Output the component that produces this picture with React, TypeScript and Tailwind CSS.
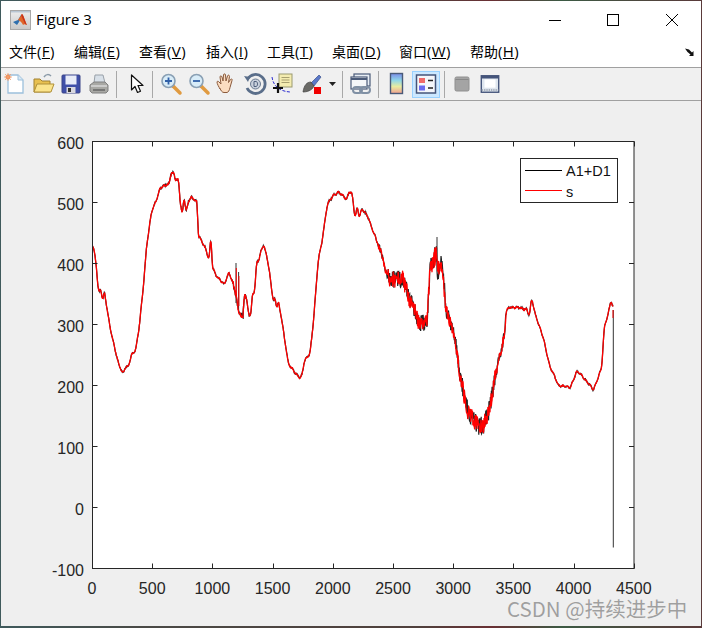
import React from "react";

const P: [number, number][] = [
  [92.7,245],[94,250],[96,263],[97.5,280],[98.7,293],[100.7,289],[102.7,300.7],[104.3,291.7],[107.3,310],[110,326.7],[115,350],[118.3,363],[123,373.3],[125,368],[128.3,367],[131.7,354],[135.7,350],[139.3,326.7],[143.3,286.7],[146.7,245],[151.7,211.7],[156,200.7],[160,188.3],[169.3,183.3],[170.7,173.3],[174,173.3],[175,180],[178.7,180],[180,200],[182.3,215],[184,196.7],[186.3,213.3],[188.3,201.7],[191.7,196.7],[197.3,202.7],[198,235],[205,246.7],[209,260],[211,236],[212.3,266.7],[216,275],[220,280],[224,285],[229,271.7],[233.3,285],[236,295],[238.3,310],[243.3,318.3],[244,293.3],[246,297],[249,315],[251,315],[252.3,293.3],[254.7,291.7],[256.7,261.7],[259,261],[260.7,251.7],[263.3,244],[266.7,255],[270,276.7],[273.3,301.7],[275,297],[276.7,308],[278.3,301],[281.7,320],[288.3,363],[290.7,367],[295,373],[300,377.3],[302,375],[304.3,361.7],[310,353],[313.3,323],[318.3,260],[321.7,243],[327.3,205],[333.3,195],[338.3,192.3],[346.7,199],[349.3,191],[352.3,195],[355,218.3],[357.3,206.7],[359.3,216.7],[361.7,209],[368.3,217.3],[372.7,230],[379.3,248.3],[381.7,253],[385,270],[390,280],[403.3,278.3],[408.3,296.7],[413.3,306.7],[420,325],[427.3,320],[430,266.7],[433,262],[436.7,255],[438,275],[441.7,258],[446,310],[451.7,326.7],[455,337],[460,376.7],[468.3,413],[476.7,424],[483.3,427],[490,406.7],[498.3,360],[504.3,336.7],[506,311.7],[510,306.7],[526.7,309],[529.3,316.7],[531.7,298.3],[535,313],[543.3,338.3],[550,366.7],[558.3,385],[570,387.7],[576.7,371.7],[581.7,375],[593.3,390],[601.7,368],[604.3,326.7],[608.3,313],[611,300],[613.3,310],
];

function amp(x: number) {
  if (x < 233) return x > 160 && x < 200 ? 1.8 : 1.2;
  if (x < 246) return 5;
  if (x < 378) return 1.3;
  if (x < 388) return 6;
  if (x < 430) return 15;
  if (x < 445) return 20;
  if (x < 462) return 12;
  if (x < 495) return 16;
  if (x < 506) return 10;
  if (x < 533) return 1.5;
  return 1;
}

function series(seed: number, k: number) {
  let s = seed;
  const rnd = () => {
    s = (s * 16807) % 2147483647;
    return s / 2147483647 - 0.5;
  };
  const xs: number[] = [];
  const ys: number[] = [];
  for (let i = 0; i < P.length - 1; i++) {
    const [x0, y0] = P[i];
    const [x1, y1] = P[i + 1];
    const n = Math.max(1, Math.round((x1 - x0) / 0.35));
    for (let j = 0; j < n; j++) {
      const t = j / n;
      xs.push(x0 + (x1 - x0) * t);
      ys.push(y0 + (y1 - y0) * t);
    }
  }
  let d = "";
  for (let i = 0; i < xs.length; i++) {
    let sum = 0;
    let c = 0;
    for (let w = -2; w <= 2; w++) {
      const v = ys[i + w];
      if (v !== undefined) {
        sum += v;
        c++;
      }
    }
    const x = xs[i];
    const y = sum / c + rnd() * amp(x) * k + (Math.sin(x * 1.37) + 0.7 * Math.sin(x * 0.53)) * 0.7;
    d += (d ? "L" : "M") + x.toFixed(2) + " " + y.toFixed(2);
  }
  return d;
}

const red = series(12345, 1);
const black = series(98765, 1.15);
const yTicks = [600, 500, 400, 300, 200, 100, 0, -100];
const xTicks = [0, 500, 1000, 1500, 2000, 2500, 3000, 3500, 4000, 4500];
const menus = [
  ["文件", "F", "w-[65px]"],
  ["编辑", "E", "w-[65px]"],
  ["查看", "V", "w-[67px]"],
  ["插入", "I", "w-[61px]"],
  ["工具", "T", "w-[65px]"],
  ["桌面", "D", "w-[67px]"],
  ["窗口", "W", "w-[71px]"],
  ["帮助", "H", "w-[60px]"],
];

function Ico({ children }: { children: React.ReactNode }) {
  return (
    <svg width="24" height="24" viewBox="0 0 24 24" className="block">
      {children}
    </svg>
  );
}

function Sep({ ml }: { ml: string }) {
  return <div className={`h-[27px] w-px shrink-0 bg-[#a8a8a8] ${ml}`} />;
}

function Slot({ w, children }: { w: string; children: React.ReactNode }) {
  return <div className={`flex h-full shrink-0 items-center justify-center ${w}`}>{children}</div>;
}

export default function App() {
  return (
    <div className="flex h-[628px] w-[702px] flex-col overflow-hidden bg-[linear-gradient(90deg,#3f5a5c_0%,#4a4a46_20%,#50403c_60%,#6a3034_70%,#3c5a44_80%,#5a3a3a_100%)] px-px pt-px pb-[2px]">
      {/* Title bar */}
      <div className="relative flex h-[37px] shrink-0 items-center bg-white pl-[9px]">
        <svg width="21" height="20" viewBox="0 0 21 20" className="block">
          <defs>
            <linearGradient id="fr" x1="0" y1="0" x2="0" y2="1">
              <stop offset="0" stopColor="#9fb4c8" />
              <stop offset="0.15" stopColor="#e8e8e8" />
              <stop offset="1" stopColor="#c8c8c8" />
            </linearGradient>
          </defs>
          <rect x="0.5" y="0.5" width="20" height="19" fill="url(#fr)" stroke="#a8a8a8" />
          <path d="M3 12l5-2 3-5 1 1-3 6-2 3z" fill="#2f6fae" />
          <path d="M8 10l4-6c1.500 1 3 7 5 11-2-1-3-1-4 0-1-2-2-4-5-5z" fill="#e0662a" />
          <path d="M11 5l1-1c1.500 1 3 7 5 11l-2-1z" fill="#c9351c" />
        </svg>
        <span className="ml-[5px] text-[15px] leading-none text-black [font-family:'Open_Sans','Noto_Sans',sans-serif]">Figure 3</span>
        <div className="ml-auto flex items-center">
          <svg width="14" height="14" viewBox="0 0 14 14" className="mr-[44px] block">
            <path d="M1 7.500h12" stroke="#000" strokeWidth="1" />
          </svg>
          <svg width="14" height="14" viewBox="0 0 14 14" className="mr-[45px] block">
            <rect x="1.500" y="1.500" width="11" height="11" fill="none" stroke="#000" />
          </svg>
          <svg width="14" height="14" viewBox="0 0 14 14" className="mr-[22px] block">
            <path d="M1 1l12 12M13 1L1 13" stroke="#000" strokeWidth="1" />
          </svg>
        </div>
      </div>

      {/* Menu bar */}
      <div className="flex h-[30px] shrink-0 items-center border-b border-[#a0a0a0] bg-white pb-[2px] pl-[8px] text-[14px] leading-none text-black [font-family:'Noto_Sans_CJK_SC','Noto_Sans',sans-serif]">
        {menus.map(([c, k, w]) => (
          <span key={k} className={`whitespace-nowrap ${w}`}>
            {c}
            <span className="text-[15px] tracking-[0.4px] [font-family:'Open_Sans','Noto_Sans',sans-serif]">
              (<span className="underline">{k}</span>)
            </span>
          </span>
        ))}
        <svg width="12" height="10" viewBox="0 0 12 10" className="ml-auto mr-[5px] block">
          <path d="M1 1.500l4 1 3 3 1.500-1.500V9H5l1.500-1.500-3-2.500z" fill="#111" />
        </svg>
      </div>

      {/* Toolbar */}
      <div className="flex h-[33px] shrink-0 items-center border-b border-[#a0a0a0] bg-[#f0f0f0]">
        <Slot w="w-[28px]">
          <Ico>
            <path d="M5 3h10l5 5v13H5z" fill="#fff" stroke="#9cc0dc" strokeWidth="1.300" />
            <path d="M15 3v5h5" fill="#d8e8f4" stroke="#9cc0dc" />
            <circle cx="5" cy="5" r="2.500" fill="#f08a50" />
            <path d="M5 1v8M1 5h8M2 2l6 6M8 2l-6 6" stroke="#f0a070" strokeWidth="0.800" />
          </Ico>
        </Slot>
        <Slot w="w-[27px]">
          <Ico>
            <path d="M13 5c2-3 5-3 7-1" fill="none" stroke="#8a9aa8" strokeWidth="1.500" />
            <path d="M3 20V7h6l2 2h8v11z" fill="#e8c050" stroke="#a08030" />
            <path d="M3 20l3-8h17l-3 8z" fill="#fbe48c" stroke="#b09038" />
          </Ico>
        </Slot>
        <Slot w="w-[29px]">
          <Ico>
            <rect x="3" y="3" width="18" height="18" rx="1" fill="#3f4fa8" stroke="#3a4488" />
            <rect x="6.500" y="3.500" width="11" height="9" fill="#e8ecf8" />
            <rect x="7.500" y="15" width="9" height="6" fill="#d8d8e0" />
            <rect x="9" y="16" width="3" height="4" fill="#333" />
          </Ico>
        </Slot>
        <Slot w="w-[27px]">
          <Ico>
            <path d="M8 3h8l2 8H7z" fill="#d8e0e8" stroke="#98a0a8" />
            <path d="M3 13l4-3h11l3 3v6l-2 2H5l-2-2z" fill="#a8a8a4" stroke="#808080" />
            <path d="M4 14h16" stroke="#d8d8d8" strokeWidth="1.500" />
            <path d="M6 18h12" stroke="#666" strokeWidth="1.500" />
          </Ico>
        </Slot>
        <Sep ml="ml-[4px]" />
        <div className="flex h-full w-[35px] shrink-0 items-center justify-center pl-[5px]">
          <Ico>
            <path d="M6.500 3v15l3.500-3.500 2.500 6 3-1.300-2.500-5.700h5z" fill="#fff" stroke="#111" strokeWidth="1.200" strokeLinejoin="round" />
          </Ico>
        </div>
        <Sep ml="" />
        <Slot w="w-[28px] ml-[4px]">
          <Ico>
            <path d="M14 14l7 7" stroke="#e09a40" strokeWidth="3.500" strokeLinecap="round" />
            <circle cx="9.500" cy="9" r="6.500" fill="#d8ecf8" stroke="#8aa0b4" strokeWidth="1.600" />
            <path d="M6 9h7M9.500 5.500v7" stroke="#3060a8" strokeWidth="1.800" />
          </Ico>
        </Slot>
        <Slot w="w-[28px]">
          <Ico>
            <path d="M14 14l7 7" stroke="#e09a40" strokeWidth="3.500" strokeLinecap="round" />
            <circle cx="9.500" cy="9" r="6.500" fill="#d8ecf8" stroke="#8aa0b4" strokeWidth="1.600" />
            <path d="M6 9h7" stroke="#3060a8" strokeWidth="1.800" />
          </Ico>
        </Slot>
        <Slot w="w-[28px]">
          <Ico>
            <path d="M5 17c-1-2-3-5-3-7 0-1 1.500-1 2 0l2 2-1-7c0-1.500 1.500-1.500 2 0l1 4 .5-6c0-1.500 2-1.500 2 0l.5 6 1.500-5c.5-1.500 2-1 2 .5l-1 6 2-3c1-1 2-.5 1.500 1l-2 7c-.5 3-2 5-3 5H9c-2 0-3-2-4-4z" fill="#fbdcc0" stroke="#8a5a3c" strokeWidth="1" />
          </Ico>
        </Slot>
        <Slot w="w-[27px]">
          <Ico>
            <path d="M4.500 7A9.500 9.500 0 1 1 4 16" fill="none" stroke="#5a6e8a" strokeWidth="2.800" />
            <path d="M1 4l6 1-2 5z" fill="#5a6e8a" />
            <circle cx="12.500" cy="12" r="5" fill="#c8d0dc" stroke="#6a7a90" />
            <path d="M11 9.500h2c2 0 2 5 0 5h-2z" fill="none" stroke="#50607c" />
          </Ico>
        </Slot>
        <Slot w="w-[28px]">
          <Ico>
            <path d="M2 5c1 7 5 14 18 15" fill="none" stroke="#2a2ad0" strokeWidth="1" strokeDasharray="3 1.500" />
            <rect x="9" y="2" width="13" height="13" fill="#f4ecb0" stroke="#9a9a70" />
            <path d="M11.500 5.500h8M11.500 8h8M11.500 10.500h8" stroke="#a8a070" />
            <path d="M8 11v10M3 16h10" stroke="#111" strokeWidth="2.200" />
          </Ico>
        </Slot>
        <Slot w="w-[30px]">
          <Ico>
            <path d="M12 11l8-8 2 2-7 9z" fill="#5a78c8" stroke="#3a508c" strokeWidth="0.700" />
            <path d="M12 10c-4 0-7 3-8 10 3 0 9-1 11-6z" fill="#6a6a66" stroke="#444" strokeWidth="0.700" />
            <rect x="15" y="15" width="7" height="7" fill="#f00000" />
          </Ico>
        </Slot>
        <Slot w="w-[12px]">
          <svg width="7" height="4" viewBox="0 0 7 4" className="block">
            <path d="M0 0h7L3.500 4z" fill="#222" />
          </svg>
        </Slot>
        <Sep ml="ml-[4px]" />
        <Slot w="w-[35px]">
          <Ico>
            <rect x="5" y="2" width="16" height="12" fill="#e8eef4" stroke="#4a5a78" strokeWidth="1.200" />
            <rect x="2" y="5" width="16" height="12" fill="#f4f6f8" stroke="#4a5a78" strokeWidth="1.200" />
            <path d="M2 7h16" stroke="#4a5a78" strokeWidth="2" />
            <rect x="4" y="15" width="9" height="6" rx="3" fill="none" stroke="#8090a4" strokeWidth="2" />
            <rect x="11" y="15" width="10" height="6" rx="3" fill="none" stroke="#8090a4" strokeWidth="2" />
          </Ico>
        </Slot>
        <Sep ml="" />
        <div className="flex h-full w-[33px] shrink-0 items-center justify-center pl-[3px]">
          <Ico>
            <defs>
              <linearGradient id="cb" x1="0" y1="0" x2="0" y2="1">
                <stop offset="0" stopColor="#7a8ce8" />
                <stop offset="0.35" stopColor="#90d8e8" />
                <stop offset="0.65" stopColor="#e8eca0" />
                <stop offset="1" stopColor="#f0a090" />
              </linearGradient>
            </defs>
            <rect x="5.500" y="1.500" width="12" height="20" fill="url(#cb)" stroke="#4a5a78" strokeWidth="1.400" />
          </Ico>
        </div>
        <div className="flex h-[27px] w-[28px] shrink-0 items-center justify-center border border-[#99d1ff] bg-[#cce8ff]">
          <Ico>
            <rect x="2.500" y="3" width="19" height="18" fill="#f4f6fa" stroke="#44547a" strokeWidth="1.500" />
            <rect x="5" y="6" width="6" height="5" fill="#f06a6a" />
            <rect x="5" y="13.500" width="6" height="5" fill="#6a6af0" />
            <path d="M14 8.500h5M14 16h5" stroke="#222" strokeWidth="1.500" />
          </Ico>
        </div>
        <Sep ml="ml-[4px]" />
        <Slot w="w-[34px]">
          <Ico>
            <rect x="5" y="5" width="14" height="14" rx="1.500" fill="#a4a4a4" stroke="#909090" />
            <path d="M5.500 7.500h13" stroke="#888888" />
          </Ico>
        </Slot>
        <Slot w="w-[22px]">
          <Ico>
            <rect x="2.500" y="3" width="19" height="18" fill="#dfe6ee" stroke="#44547a" strokeWidth="1.500" />
            <rect x="2.500" y="3" width="19" height="3" fill="#44547a" />
            <rect x="6" y="7" width="12" height="9" fill="#fff" />
            <path d="M3 18.500h18" stroke="#a8b0bc" strokeWidth="2" strokeDasharray="1.500 1" />
          </Ico>
        </Slot>
      </div>

      {/* Figure area */}
      <div className="relative min-h-0 flex-1 bg-[#efefef]">
        <svg width="700" height="525" viewBox="1 101 700 525" className="block">
          <rect x="92.5" y="141.5" width="541.500" height="427" fill="#fff" />
          <path d="M92.500 418V245" stroke="#555" strokeWidth="1" fill="none" />
          <path d={black} fill="none" stroke="#222" strokeWidth="1.200" />
          <path d="M236 263V303M238.600 272V310M243.300 306V319M437 237V262M613.300 310V547.500" fill="none" stroke="#333" strokeWidth="1" />
          <path d={red} fill="none" stroke="#ff0000" strokeWidth="1.300" strokeLinejoin="round" />
          <path d="M613 310V318M236.300 268V298M238.900 276V306" stroke="#ff0000" strokeWidth="1" />

          <g stroke="#262626" strokeWidth="1" fill="none">
            <rect x="92.5" y="141.5" width="541.500" height="427" />
            {yTicks.map((_, i) => (
              <path key={i} d={`M92.500 ${141.5 + i * 61}h5M634 ${141.5 + i * 61}h-5`} />
            ))}
            {xTicks.map((_, i) => (
              <path key={i} d={`M${Math.round(92 + i * 60.2) + 0.5} 568.500v-5M${Math.round(92 + i * 60.2) + 0.5} 141.500v5`} />
            ))}
          </g>

          <g fill="#262626" fontSize="16" fontFamily="'Liberation Sans',Arial,sans-serif">
            {yTicks.map((t, i) => (
              <text key={t} x="84" y={149 + i * 61} textAnchor="end">
                {t}
              </text>
            ))}
            {xTicks.map((t, i) => (
              <text key={t} x={92 + i * 60.2} y="594" textAnchor="middle">
                {t}
              </text>
            ))}
          </g>

          <rect x="520.5" y="158.5" width="97" height="44" fill="#fff" stroke="#262626" />
          <path d="M525 170.500h37" stroke="#000" />
          <path d="M525 190.500h37" stroke="#ff0000" />
          <g fill="#111" fontSize="14.500" fontFamily="'Liberation Sans',Arial,sans-serif">
            <text x="566" y="176">A1+D1</text>
            <text x="566" y="197">s</text>
          </g>
        </svg>
        <span className="absolute left-[506px] top-[497px] whitespace-nowrap text-[20.5px] leading-[20px] text-[#8c8c8c] opacity-80 [font-family:'Noto_Sans_CJK_SC','Noto_Sans',sans-serif] [text-shadow:0_0_1px_#ffffff]">
          CSDN @持续进步中
        </span>
      </div>
    </div>
  );
}
